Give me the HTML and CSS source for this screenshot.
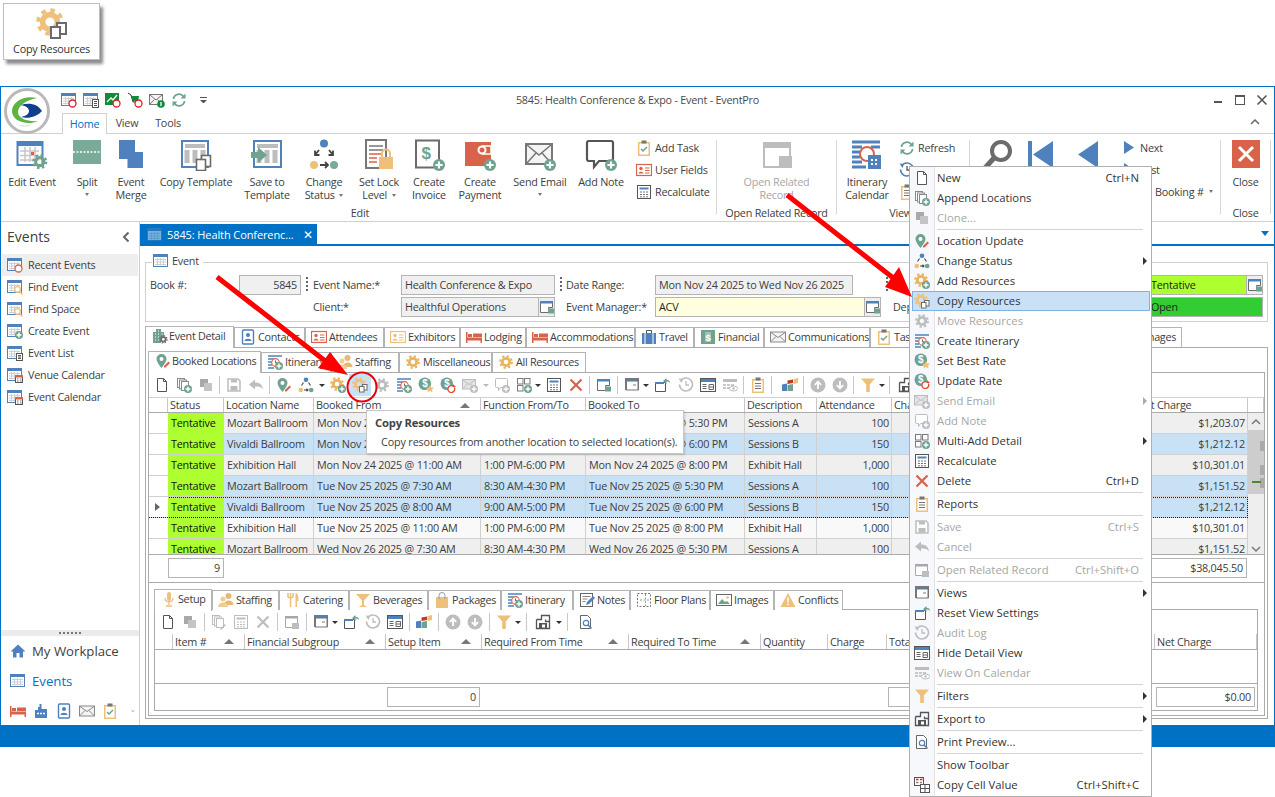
FILE: index.html
```html
<!DOCTYPE html>
<html lang="en">
<head>
<meta charset="utf-8">
<title>5845: Health Conference &amp; Expo - Event - EventPro</title>
<link rel="stylesheet" href="styles.css">
</head>
<body>
<svg class="defs" width="0" height="0" aria-hidden="true">
<defs>
<g id="pl"><circle cx="12" cy="12" r="4" fill="#6FA38F"/><path d="M12 9.6v4.8M9.6 12h4.8" stroke="#fff" stroke-width="1.4"/></g>
<g id="pld"><circle cx="12" cy="12" r="4" fill="#BDBDBD"/><path d="M12 9.6v4.8M9.6 12h4.8" stroke="#fff" stroke-width="1.4"/></g>
<g id="cf"><rect x=".5" y="1.5" width="14" height="12" fill="#fff" stroke="#4F81BD"/><rect x="1" y="2" width="13" height="2" fill="#4F81BD"/><path d="M2 6.500h11M2 9h11M2 11.500h11M4.500 5v7.500M7.500 5v7.500M10.500 5v7.500" stroke="#CFCFCF"/></g>
<g id="gr" fill="none" stroke="currentColor"><circle cx="7" cy="7" r="3.700" stroke-width="2.800"/><circle cx="7" cy="7" r="5.900" stroke-width="2" stroke-dasharray="2.300 2.330"/></g>
<g id="cp"><rect x="10.500" y="7.500" width="4.500" height="5.500" fill="#fff" stroke="#6B6B6B"/><rect x="7.500" y="9.500" width="4.500" height="5.500" fill="#fff" stroke="#6B6B6B"/></g>
<symbol id="new" viewBox="0 0 16 16"><path d="M3.500 1.500h6l3 3v10h-9z" fill="#fff" stroke="#555"/><path d="M9.500 1.500v3h3" fill="none" stroke="#555"/></symbol>
<symbol id="append" viewBox="0 0 16 16"><g fill="#fff" stroke="#8A8A8A"><rect x="1.500" y="1.500" width="7" height="9"/><rect x="3.500" y="3" width="7" height="9"/><rect x="5.500" y="4.500" width="7" height="9"/></g><use href="#pl"/></symbol>
<symbol id="appendd" viewBox="0 0 16 16"><g fill="#fff" stroke="#BDBDBD"><rect x="1.500" y="1.500" width="7" height="9"/><rect x="3.500" y="3" width="7" height="9"/><rect x="5.500" y="4.500" width="7" height="9"/></g><path d="M9 15l5-5 1 1-5 5z" fill="#BDBDBD"/></symbol>
<symbol id="clone" viewBox="0 0 16 16"><rect x="2" y="2" width="8" height="8" fill="#A8A8A8"/><rect x="6" y="6" width="8" height="8" fill="#C4C4C4"/></symbol>
<symbol id="pin" viewBox="0 0 16 16"><path d="M6.500 1a5 5 0 0 1 5 5c0 3.400-5 9-5 9s-5-5.600-5-9a5 5 0 0 1 5-5z" fill="#6FA38F"/><circle cx="6.500" cy="6" r="2" fill="#fff"/><path d="M9 13l4.500-4.500 1.500 1.500-4.500 4.500H9z" fill="#D9634A"/></symbol>
<symbol id="triad" viewBox="0 0 16 16"><circle cx="8" cy="2.800" r="2.300" fill="#4F81BD"/><circle cx="2.800" cy="13" r="2.300" fill="#EEC07A"/><circle cx="13.200" cy="13" r="2.300" fill="#6FA38F"/><path d="M6 13h4M8.500 11.800l1.500 1.200-1.500 1.200M5.500 5.500l-2 3M10.500 5.500l2 3" fill="none" stroke="#444" stroke-width="1.100"/></symbol>
<symbol id="gearplus" viewBox="0 0 16 16"><use href="#gr" color="#E9B45F"/><use href="#pl"/></symbol>
<symbol id="gearcopy" viewBox="0 0 16 16"><use href="#gr" color="#EEC07A"/><use href="#cp"/></symbol>
<symbol id="gearonly" viewBox="0 0 16 16"><g transform="translate(1 1)"><use href="#gr" color="#E9B45F"/></g></symbol>
<symbol id="geargray" viewBox="0 0 16 16"><g transform="translate(1 1)"><use href="#gr" color="#BDBDBD"/></g></symbol>
<symbol id="itin" viewBox="0 0 16 16"><path d="M1 2h14M1 5h6M1 8h4M1 11h4M1 14h6" stroke="#4F81BD" stroke-width="1.600"/><circle cx="8.500" cy="8.500" r="3.800" fill="#fff" stroke="#D9634A" stroke-width="1.200"/><path d="M8.500 6.500v2.200h1.700" fill="none" stroke="#666"/><use href="#pl"/></symbol>
<symbol id="dstar" viewBox="0 0 16 16"><circle cx="6.800" cy="6.800" r="6.300" fill="#6FA38F"/><text x="6.800" y="10.300" font-size="10" font-family="Liberation Sans" font-weight="700" fill="#fff" text-anchor="middle">$</text><path d="M12 8l1.200 2.500 2.800.3-2 1.900.6 2.800-2.600-1.400-2.600 1.400.6-2.800-2-1.900 2.800-.3z" fill="#EEC07A"/></symbol>
<symbol id="drefresh" viewBox="0 0 16 16"><circle cx="6.800" cy="6.800" r="6.300" fill="#6FA38F"/><text x="6.800" y="10.300" font-size="10" font-family="Liberation Sans" font-weight="700" fill="#fff" text-anchor="middle">$</text><path d="M14.300 10.500a3.400 3.400 0 1 1-1.100-1.200" fill="#fff" stroke="#E04B30" stroke-width="1.300"/><path d="M13 7v3h3z" fill="#E04B30"/></symbol>
<symbol id="mailplus" viewBox="0 0 16 16"><rect x=".5" y="2.500" width="13" height="9.500" fill="#E4E4E4" stroke="#BDBDBD"/><path d="M1 3l6 4.500 6-4.500M1 11.500l4.500-4.500M13 11.500l-4.500-4.500" fill="none" stroke="#BDBDBD"/><use href="#pld"/></symbol>
<symbol id="noteplus" viewBox="0 0 16 16"><path d="M2.500 1.500h10a1 1 0 0 1 1 1v7a1 1 0 0 1-1 1h-6l-2 3v-3h-2a1 1 0 0 1-1-1v-7a1 1 0 0 1 1-1z" fill="#fff" stroke="#BDBDBD"/><use href="#pld"/></symbol>
<symbol id="multi" viewBox="0 0 16 16"><g fill="#fff" stroke="#7A7A7A"><rect x="1.500" y="1.500" width="5.500" height="5.500"/><rect x="8.500" y="1.500" width="5.500" height="5.500"/><rect x="1.500" y="8.500" width="5.500" height="5.500"/></g><use href="#pl"/></symbol>
<symbol id="calc" viewBox="0 0 16 16"><rect x="1.500" y="1.500" width="13" height="13" fill="#fff" stroke="#555"/><rect x="3.500" y="3.500" width="9" height="2" fill="#4F81BD"/><path d="M4 8h2M7 8h2M10 8h2M4 10.500h2M7 10.500h2M10 10.500h2M4 12.800h2M7 12.800h2M10 12.800h2" stroke="#777"/></symbol>
<symbol id="calcd" viewBox="0 0 16 16"><rect x="1.500" y="1.500" width="13" height="13" fill="#fff" stroke="#BDBDBD"/><rect x="3.500" y="3.500" width="9" height="2" fill="#BDBDBD"/><path d="M4 8h2M7 8h2M10 8h2M4 10.500h2M7 10.500h2M10 10.500h2M4 12.800h2M7 12.800h2M10 12.800h2" stroke="#BDBDBD"/></symbol>
<symbol id="x" viewBox="0 0 16 16"><path d="M2.500 2.500l11 11M13.500 2.500l-11 11" stroke="#D9634A" stroke-width="2.200"/></symbol>
<symbol id="xd" viewBox="0 0 16 16"><path d="M2.500 2.500l11 11M13.500 2.500l-11 11" stroke="#BDBDBD" stroke-width="2.200"/></symbol>
<symbol id="clip" viewBox="0 0 16 16"><rect x="2" y="2" width="12" height="14" fill="#EEC07A"/><rect x="3.500" y="3.500" width="9" height="11" fill="#fff"/><rect x="5.500" y=".5" width="5" height="3" fill="#777"/><path d="M5 6.500h6M5 9h6M5 11.500h6" stroke="#777"/></symbol>
<symbol id="clipok" viewBox="0 0 16 16"><rect x="2" y="2" width="12" height="14" fill="#EEC07A"/><rect x="3.500" y="3.500" width="9" height="11" fill="#fff"/><rect x="5.500" y=".5" width="5" height="3" fill="#777"/><path d="M5 9l2 2 4-4" fill="none" stroke="#6FA38F" stroke-width="1.500"/></symbol>
<symbol id="save" viewBox="0 0 16 16"><path d="M2 2h10l2 2v10H2z" fill="#fff" stroke="#BDBDBD" stroke-width="1.500"/><rect x="5" y="2.500" width="6" height="3" fill="#BDBDBD"/><rect x="4.500" y="9" width="7" height="4.500" fill="#BDBDBD"/></symbol>
<symbol id="undo" viewBox="0 0 16 16"><path d="M1 7.500l6-5v3c5 0 7.500 2.500 8 7-1.500-2.500-3.500-3-8-3v3z" fill="#BDBDBD"/></symbol>
<symbol id="openrel" viewBox="0 0 16 16"><path d="M1.500 2.500h12v8h-4v3h-8z" fill="#fff" stroke="#A8A8A8"/><rect x="1" y="2" width="13" height="2.500" fill="#A8A8A8"/><rect x="8" y="9" width="7" height="6" fill="#BDBDBD"/></symbol>
<symbol id="openrelc" viewBox="0 0 16 16"><path d="M1.500 2.500h12v6h-4v5h-8z" fill="#fff" stroke="#6B6B6B"/><rect x="1" y="2" width="13" height="2.500" fill="#4F81BD"/><rect x="9" y="9.500" width="6" height="5" fill="#6FA38F"/></symbol>
<symbol id="views" viewBox="0 0 16 16"><rect x="1.500" y="1.500" width="13" height="11" fill="#fff" stroke="#777"/><rect x="2" y="2" width="12" height="2.500" fill="#4F81BD"/><rect x="2.500" y="4" width="11.500" height="9" fill="#fff" stroke="#777"/><rect x="9" y="7" width="3" height="2" fill="#BDBDBD"/></symbol>
<symbol id="reset" viewBox="0 0 16 16"><path d="M1.500 5.500h10v9h-10z" fill="#fff" stroke="#555"/><rect x="1" y="5" width="9" height="2" fill="#4F81BD"/><path d="M9 4l3.500-3v1.800c2 0 3.500 1 3.500 3.200-1-1.200-2-1.500-3.500-1.500V7z" fill="#6FA38F"/></symbol>
<symbol id="audit" viewBox="0 0 16 16"><path d="M2.500 4a6.500 6.500 0 1 1-1 3.500" fill="none" stroke="#BDBDBD" stroke-width="1.600"/><path d="M0.500 1.500l4.500.5-1.500 4z" fill="#BDBDBD"/><path d="M8 4v4h3" fill="none" stroke="#BDBDBD" stroke-width="1.300"/></symbol>
<symbol id="hide" viewBox="0 0 16 16"><rect x=".5" y="1.500" width="15" height="13" fill="#fff" stroke="#555"/><rect x="1" y="2" width="14" height="3" fill="#4F81BD"/><path d="M2.500 7.500h4M2.500 9.500h4M2.500 11.500h4M9 7.500h4.500v5H9zM9 10h4.500" fill="none" stroke="#666"/></symbol>
<symbol id="viewcal" viewBox="0 0 16 16"><rect x="1" y="2" width="14" height="3" fill="#BDBDBD"/><path d="M1 7h3v2H1zM5 7h3v2H5zM9 7h3v2H9zM1 10h3v2H1zM5 10h3v2H5z" fill="#C8C8C8"/><ellipse cx="11.500" cy="11.500" rx="4" ry="2.500" fill="#fff" stroke="#BDBDBD"/><circle cx="11.500" cy="11.500" r="1.200" fill="#BDBDBD"/></symbol>
<symbol id="filter" viewBox="0 0 16 16"><path d="M1 1.500h14L9.800 7.500v7.500H6.200V7.500z" fill="#EEC07A"/></symbol>
<symbol id="export" viewBox="0 0 16 16"><path d="M1.500 5.500h5v-4h8v6h-4v-2M1.500 5.500v9h13v-7" fill="none" stroke="#555" stroke-width="1.300"/><rect x="4" y="9" width="8" height="5.500" fill="#555"/><rect x="7" y="10.500" width="3" height="3" fill="#fff"/></symbol>
<symbol id="preview" viewBox="0 0 16 16"><path d="M2.500 1.500h7l3 3v10h-10z" fill="#fff" stroke="#666"/><circle cx="8" cy="9" r="2.700" fill="#fff" stroke="#4F81BD" stroke-width="1.200"/><path d="M10 11l3.500 3.500" stroke="#4F81BD" stroke-width="1.500"/></symbol>
<symbol id="copycell" viewBox="0 0 16 16"><rect x=".5" y=".5" width="9" height="8" fill="#fff" stroke="#555"/><path d="M2 2.500h2.500M6 2.500h2.500" stroke="#D22" stroke-width="1.500"/><path d="M2 5.500h2.500M6 5.500h2" stroke="#888" stroke-width="1.500"/><rect x="6.500" y="7.500" width="9" height="8" fill="#fff" stroke="#555"/><path d="M6.500 11.500h9M11 7.500v8" stroke="#555"/></symbol>
<symbol id="rainbow" viewBox="0 0 16 16"><path d="M0 7.500L5 6.500V14H0z" fill="#4F81BD"/><path d="M5.500 3.500L11 2.500V6L5.500 7z" fill="#C8352B"/><path d="M5.500 8L11 7v7H5.500z" fill="#6FA38F"/><path d="M11.500 2L16 1v5l-4.500 1z" fill="#EEC07A"/></symbol>
<symbol id="up" viewBox="0 0 16 16"><circle cx="8" cy="8" r="7.500" fill="#BDBDBD"/><path d="M8 12V5M4.800 8L8 4.500 11.200 8" fill="none" stroke="#fff" stroke-width="1.800"/></symbol>
<symbol id="down" viewBox="0 0 16 16"><circle cx="8" cy="8" r="7.500" fill="#BDBDBD"/><path d="M8 4v7M4.800 8L8 11.500 11.200 8" fill="none" stroke="#fff" stroke-width="1.800"/></symbol>
<symbol id="cal" viewBox="0 0 16 16"><use href="#cf"/></symbol>
<symbol id="calrecent" viewBox="0 0 16 16"><use href="#cf"/><circle cx="11.500" cy="11.500" r="3.500" fill="#fff" stroke="#D9634A" stroke-width="1.300"/></symbol>
<symbol id="calfind" viewBox="0 0 16 16"><use href="#cf"/><circle cx="10.500" cy="10.500" r="2.800" fill="#fff" stroke="#EEC07A" stroke-width="1.300"/><path d="M12.500 12.500l3 3" stroke="#EEC07A" stroke-width="1.500"/></symbol>
<symbol id="calplus" viewBox="0 0 16 16"><use href="#cf"/><use href="#pl"/></symbol>
<symbol id="callist" viewBox="0 0 16 16"><use href="#cf"/><rect x="9.500" y="8.500" width="6" height="7" fill="#fff" stroke="#555"/><path d="M11 10.500h3M11 12h3M11 13.500h3" stroke="#555"/></symbol>
<symbol id="calcal" viewBox="0 0 16 16"><use href="#cf"/><rect x="8.500" y="8.500" width="7" height="7" fill="#fff" stroke="#555"/><rect x="8" y="8" width="8" height="2.500" fill="#D9634A"/><path d="M10 12h1.500M13 12h1.500M10 14h1.500M13 14h1.500" stroke="#777"/></symbol>
<symbol id="bld" viewBox="0 0 16 16"><path d="M1 15V4h3V1h5v3h3v5H9v6z" fill="#6FA38F"/><path d="M3 6h1M6 3h1M6 6h1M3 9h1M6 9h1M3 12h1M6 12h1M9.500 6h1" stroke="#fff"/><g transform="translate(7 7) scale(.62)"><use href="#gr" color="#6B6B6B"/></g></symbol>
<symbol id="contact" viewBox="0 0 16 16"><rect x="2.500" y="1" width="11" height="14" rx="1" fill="#fff" stroke="#4F81BD" stroke-width="1.400"/><circle cx="8" cy="6" r="2" fill="#4F81BD"/><path d="M4.500 12c0-3 7-3 7 0z" fill="#4F81BD"/></symbol>
<symbol id="attend" viewBox="0 0 16 16"><rect x=".5" y="2.500" width="15" height="11" fill="#fff" stroke="#D9634A" stroke-width="1.200"/><circle cx="5" cy="6.500" r="1.700" fill="#D9634A"/><path d="M2.500 11.500c0-2.500 5-2.500 5 0z" fill="#D9634A"/><path d="M9 6h4.500M9 8.500h4.500M9 11h4.500" stroke="#D9634A"/></symbol>
<symbol id="exhib" viewBox="0 0 16 16"><rect x=".5" y="2.500" width="15" height="11" fill="#fff" stroke="#EEC07A" stroke-width="1.200"/><circle cx="5" cy="6.500" r="1.700" fill="#EEC07A"/><path d="M2.500 11.500c0-2.500 5-2.500 5 0z" fill="#EEC07A"/><path d="M9 6h4.500M9 8.500h4.500M9 11h4.500" stroke="#EEC07A"/></symbol>
<symbol id="bed" viewBox="0 0 16 16"><path d="M0 3h1.500v5.500H16V14h-1.500v-2.500h-13V14H0z" fill="#D9634A"/><rect x="2" y="5" width="4" height="3" fill="#D9634A"/><rect x="7" y="4.500" width="9" height="3.500" fill="#D9634A"/></symbol>
<symbol id="case" viewBox="0 0 16 16"><rect x="1" y="4" width="14" height="11" fill="#4F81BD"/><path d="M5.500 4V1.500h5V4" fill="none" stroke="#555"/><path d="M4 4v11M12 4v11" stroke="#fff"/></symbol>
<symbol id="bill" viewBox="0 0 16 16"><rect x="1" y="1" width="14" height="14" fill="#6FA38F"/><rect x="5" y="3" width="6" height="10" fill="#fff" opacity=".35"/><text x="8" y="11.500" font-size="9.500" font-family="Liberation Sans" font-weight="700" fill="#fff" text-anchor="middle">$</text></symbol>
<symbol id="mail" viewBox="0 0 16 16"><rect x=".5" y="3" width="15" height="10" fill="#F4F4F4" stroke="#888"/><path d="M1 3.500l7 5 7-5M1 12.500l5-5M15 12.500l-5-5" fill="none" stroke="#888"/></symbol>
<symbol id="people" viewBox="0 0 16 16"><circle cx="10.500" cy="4" r="3" fill="#E8B878"/><path d="M6 13c0-6 9.500-6 9.500 0z" fill="#E8B878"/><circle cx="5" cy="7" r="2.500" fill="#EFCB98"/><path d="M0 15c0-6 10-6 10 0z" fill="#EFCB98"/></symbol>
<symbol id="mic" viewBox="0 0 16 16"><rect x="6" y="1" width="4" height="9" rx="2" fill="#EEC07A"/><path d="M4 7c0 5 8 5 8 0M8 11v3M5 15h6" fill="none" stroke="#EEC07A" stroke-width="1.300"/></symbol>
<symbol id="fork" viewBox="0 0 16 16"><path d="M3 1v4.500M5.500 1v4.500M8 1v4.500M3 5.500h5M5.500 5v10" stroke="#EEC07A" stroke-width="1.500" fill="none"/><path d="M10.500 1c3 0 3 5 3 8h-1.500v6h-1.500z" fill="#EEC07A"/></symbol>
<symbol id="goblet" viewBox="0 0 16 16"><path d="M1 2h14L9 8.500V13l3 2H4l3-2V8.500z" fill="#EEC07A"/></symbol>
<symbol id="bag" viewBox="0 0 16 16"><rect x="2" y="5" width="12" height="11" fill="#EEC07A"/><path d="M5 7V3.500a3 3 0 0 1 6 0V7" fill="none" stroke="#999"/></symbol>
<symbol id="note" viewBox="0 0 16 16"><rect x="1.500" y="1.500" width="12" height="13" fill="#fff" stroke="#666"/><path d="M3.500 4.500h8M3.500 7h5M3.500 9.500h3" stroke="#888"/><path d="M7 13l1-3 6-6 2 2-6 6z" fill="#4F81BD"/></symbol>
<symbol id="plan" viewBox="0 0 16 16"><rect x="1.500" y="1.500" width="13" height="13" fill="none" stroke="#777" stroke-dasharray="2 1.500"/><path d="M9.500 2v12M4 8h9" stroke="#999" stroke-dasharray="2 1.500"/></symbol>
<symbol id="image" viewBox="0 0 16 16"><rect x=".5" y="2.500" width="15" height="11" fill="#fff" stroke="#666"/><path d="M2 12l4-5 3 3 2-1 3 3z" fill="#6FA38F"/><circle cx="11.500" cy="5.500" r="1.300" fill="#EEC07A"/></symbol>
<symbol id="warn" viewBox="0 0 16 16"><path d="M8 1l7.500 14H.5z" fill="#EEC07A"/><path d="M8 5.500v5M8 11.500v1.500" stroke="#fff" stroke-width="1.500"/></symbol>
<symbol id="home" viewBox="0 0 16 16"><path d="M8 1.500L15.500 8.500H13V14.500H9.500V10h-3v4.500H3V8.500H.5z" fill="#4F81BD"/></symbol>
<symbol id="factory" viewBox="0 0 16 16"><path d="M2 15V7h3V4h1.500V1h2v5H14v9z" fill="#4F81BD"/><path d="M4 10.500h2M7 10.500h2M10 10.500h2" stroke="#fff" stroke-width="1.500"/></symbol>
<symbol id="refresh" viewBox="0 0 16 16"><path d="M2.500 7A5.500 5.500 0 0 1 12.500 4.500M13.500 9A5.500 5.500 0 0 1 3.500 11.500" fill="none" stroke="#6FA38F" stroke-width="1.800"/><path d="M14.500 1.500v5h-5zM1.500 14.500v-5h5z" fill="#6FA38F"/></symbol>
<symbol id="clock" viewBox="0 0 16 16"><path d="M2.500 4a6.500 6.500 0 1 1-1 3.500" fill="none" stroke="#4F81BD" stroke-width="1.600"/><path d="M.5 1.500L5 2 3.500 6z" fill="#4F81BD"/><path d="M8 4v4h3" fill="none" stroke="#555" stroke-width="1.300"/></symbol>
<symbol id="qcal" viewBox="0 0 16 16"><use href="#cf"/><circle cx="11.500" cy="11.500" r="3.500" fill="#fff" stroke="#D22" stroke-width="1.300"/></symbol>
<symbol id="qlist" viewBox="0 0 16 16"><use href="#cf"/><rect x="9.500" y="7.500" width="6" height="8" fill="#fff" stroke="#555"/><path d="M11 9.500h3M11 11.500h3M11 13.500h3" stroke="#555"/></symbol>
<symbol id="qchart" viewBox="0 0 16 16"><rect x="0" y="1" width="14" height="12" fill="#0E8C3A"/><path d="M2 10l4-4 2 2 4-5" fill="none" stroke="#fff" stroke-width="1.300"/><circle cx="11.500" cy="11.500" r="3.500" fill="#fff" stroke="#D22" stroke-width="1.300"/></symbol>
<symbol id="qcart" viewBox="0 0 16 16"><path d="M1 1l3 2 2 7h6" fill="none" stroke="#333"/><path d="M4 4h8l-1 5H6z" fill="#0E8C3A"/><circle cx="11.500" cy="11.500" r="3.500" fill="#fff" stroke="#D22" stroke-width="1.300"/></symbol>
<symbol id="qmail" viewBox="0 0 16 16"><rect x=".5" y="2.500" width="13" height="10" fill="#F4F4F4" stroke="#777"/><path d="M1 3l6 5 6-5M1 12l4.500-4.500M13 12L8.500 7.500" fill="none" stroke="#777"/><circle cx="12" cy="12" r="3.800" fill="#0E8C3A"/><path d="M12 10v4" stroke="#fff" stroke-width="1.300"/></symbol>
<symbol id="L-edit" viewBox="0 0 32 32"><rect x="1.500" y="3" width="25" height="23" fill="#fff" stroke="#4F81BD" stroke-width="2"/><rect x="2" y="3" width="24" height="4" fill="#4F81BD"/><path d="M4 12h19M4 16.500h19M4 21h19M9 8v15M14 8v15M19 8v15" stroke="#C8C8C8" stroke-width="1.500"/><rect x="15" y="13" width="3" height="3" fill="#D9634A"/><g transform="translate(16 15) scale(1.100)"><use href="#gr" color="#6FA38F"/></g></symbol>
<symbol id="L-split" viewBox="0 0 32 32"><rect x="2" y="1" width="28" height="24" fill="#7AAB99"/><path d="M2 13h28" stroke="#fff" stroke-width="1.500" stroke-dasharray="2 1.500"/></symbol>
<symbol id="L-merge" viewBox="0 0 32 32"><rect x="4" y="1" width="16" height="19" fill="#4F81BD"/><rect x="12.500" y="13" width="15.500" height="16" fill="#4F81BD"/></symbol>
<symbol id="L-ctpl" viewBox="0 0 32 32"><rect x="2" y="2" width="26" height="26" fill="#fff" stroke="#4F81BD" stroke-width="2"/><rect x="5" y="5" width="20" height="4" fill="#BDBDBD"/><path d="M7 11v13M15 11v13M23 11v13" stroke="#BDBDBD" stroke-width="5"/><rect x="21.500" y="16.500" width="9" height="11" fill="#fff" stroke="#6B6B6B" stroke-width="1.600"/><rect x="16.500" y="20.500" width="9" height="11" fill="#fff" stroke="#6B6B6B" stroke-width="1.600"/></symbol>
<symbol id="L-stpl" viewBox="0 0 32 32"><rect x="3" y="2" width="27" height="26" fill="#fff" stroke="#4F81BD" stroke-width="2"/><rect x="6" y="5" width="21" height="4" fill="#BDBDBD"/><path d="M8 11v13M16 11v13M24 11v13" stroke="#BDBDBD" stroke-width="5"/><path d="M0 13h7V8l9 8-9 8v-5H0z" fill="#6FA38F"/></symbol>
<symbol id="L-status" viewBox="0 0 32 32"><circle cx="16" cy="4.500" r="4" fill="#4F81BD"/><circle cx="6" cy="26" r="4" fill="#EEC07A"/><circle cx="26" cy="26" r="4" fill="#7AAB99"/><path d="M12 26h8M17 23l3 3-3 3M11 11l-4 5M7 11.500v4.500h4.500M21 11l4 5M25 11.500V16h-4.500" fill="none" stroke="#444" stroke-width="1.800"/></symbol>
<symbol id="L-lock" viewBox="0 0 32 32"><rect x="3" y="1" width="20" height="28" fill="#fff" stroke="#777" stroke-width="2"/><path d="M6 7h14M6 11h14" stroke="#777" stroke-width="1.500"/><path d="M6 15h14M6 19h8M6 23h8" stroke="#D9634A" stroke-width="1.500"/><rect x="16" y="18" width="14" height="12" fill="#EEC07A"/><path d="M19 18v-3.500a4 4 0 0 1 8 0V18" fill="none" stroke="#EEC07A" stroke-width="2"/></symbol>
<symbol id="L-inv" viewBox="0 0 32 32"><rect x="3" y="1.500" width="23" height="27" fill="#fff" stroke="#6B6B6B" stroke-width="2"/><text x="13" y="20" font-size="17" font-family="Liberation Sans" font-weight="700" fill="#6FA38F" text-anchor="middle">$</text><g transform="translate(8 8) scale(1.500)"><use href="#pl"/></g></symbol>
<symbol id="L-pay" viewBox="0 0 32 32"><rect x="1" y="3" width="26" height="24" fill="#D9634A"/><circle cx="18" cy="11" r="3.500" fill="none" stroke="#fff" stroke-width="2"/><path d="M18 7h9v8h-9" fill="none" stroke="#fff" stroke-width="1.500"/><g transform="translate(8 8) scale(1.500)"><use href="#pl"/></g></symbol>
<symbol id="L-mail" viewBox="0 0 32 32"><rect x="2" y="5" width="26" height="20" fill="#F4F4F4" stroke="#777" stroke-width="2"/><path d="M3 6l12 10 12-10M3 24l9-10M27 24l-9-10" fill="none" stroke="#777" stroke-width="1.500"/><g transform="translate(8 8) scale(1.500)"><use href="#pl"/></g></symbol>
<symbol id="L-note" viewBox="0 0 32 32"><path d="M4 2h22a2 2 0 0 1 2 2v16a2 2 0 0 1-2 2H14l-5 6v-6H4a2 2 0 0 1-2-2V4a2 2 0 0 1 2-2z" fill="#fff" stroke="#555" stroke-width="2.200"/><g transform="translate(8 8) scale(1.500)"><use href="#pl"/></g></symbol>
<symbol id="L-open" viewBox="0 0 32 32"><path d="M3 4h26v15h-9v9H3z" fill="#fff" stroke="#BDBDBD" stroke-width="2"/><rect x="2" y="3" width="28" height="6" fill="#BDBDBD"/><rect x="18" y="17" width="13" height="12" fill="#BDBDBD"/></symbol>
<symbol id="L-itin" viewBox="0 0 32 32"><path d="M1 3h28M1 8h10M1 13h8M1 18h8M1 23h10M1 28h14M20 8h9" stroke="#4F81BD" stroke-width="3"/><circle cx="16" cy="15" r="7" fill="#fff" stroke="#D9634A" stroke-width="2"/><rect x="17" y="16" width="13" height="14" fill="#4F81BD"/><path d="M20 21h2M24 21h2M20 25h2M24 25h2" stroke="#fff" stroke-width="2"/></symbol>
<symbol id="L-find" viewBox="0 0 32 32"><circle cx="19" cy="12" r="9" fill="#fff" stroke="#6B6B6B" stroke-width="4"/><path d="M12 19L3 29" stroke="#6B6B6B" stroke-width="5"/></symbol>
<symbol id="L-first" viewBox="0 0 32 32"><rect x="3" y="2" width="4" height="27" fill="#4F81BD"/><path d="M28 2v27L8 15.500z" fill="#4F81BD"/></symbol>
<symbol id="L-prev" viewBox="0 0 32 32"><path d="M26 2v27L6 15.500z" fill="#4F81BD"/></symbol>
<symbol id="next" viewBox="0 0 16 16"><path d="M3 1v13l10-6.500z" fill="#4F81BD"/></symbol>
<symbol id="L-close" viewBox="0 0 32 32"><rect x="2" y="1" width="28" height="28" fill="#D9634A"/><path d="M9 8l14 14M23 8L9 22" stroke="#fff" stroke-width="3"/></symbol>
<symbol id="L-gear" viewBox="0 0 16 16"><use href="#gr" color="#EEC07A"/><use href="#cp"/></symbol>
</defs>
</svg>

<div class="callout">
  <svg class="callout-icon"><use href="#L-gear"/></svg>
  <span>Copy Resources</span>
</div>

<div class="window">
  <svg class="logo" viewBox="0 0 46 46">
    <circle cx="23" cy="23" r="21.500" fill="#fff" stroke="#B9B9B9" stroke-width="3"/>
    <path d="M33 10C20 7 8 14 8 23c0 7 7 12 17 12 3 0 6-.5 9-2-9 1-20-2-20-9 0-6 8-12 19-14z" fill="#5FB346"/>
    <path d="M17 17c8-3 17-1 21 6-5 6-14 8-21 6 5-1 8-3 8-6s-3-5-8-6z" fill="#123F8C"/>
    <path d="M14 37c4 2 9 2 13 0-4 .5-9 .5-13 0z" fill="#CFE6BF"/>
  </svg>
  <header class="titlebar">
    <div class="qat">
      <svg class="i"><use href="#qcal"/></svg><svg class="i"><use href="#qlist"/></svg><svg class="i"><use href="#qchart"/></svg><svg class="i"><use href="#qcart"/></svg><svg class="i"><use href="#qmail"/></svg><svg class="i"><use href="#refresh"/></svg>
      <span class="qat-drop"></span>
    </div>
    <div class="wintitle">5845: Health Conference &amp; Expo - Event - EventPro</div>
    <div class="winctl">
      <svg class="ctl" viewBox="0 0 22 16"><path d="M7 10h8" stroke="#555" stroke-width="2"/></svg>
      <svg class="ctl" viewBox="0 0 22 16"><rect x="6.500" y="3.500" width="9" height="9" fill="none" stroke="#555"/><path d="M6 4h10" stroke="#555" stroke-width="2"/></svg>
      <svg class="ctl" viewBox="0 0 22 16"><path d="M6.500 3.500l9 9M15.500 3.500l-9 9" stroke="#555" stroke-width="1.600"/></svg>
    </div>
  </header>
  <nav class="rtabs">
    <span class="rtab on">Home</span><span class="rtab t-view">View</span><span class="rtab t-tools">Tools</span>
    <svg class="collapse" viewBox="0 0 12 8"><path d="M2 6l4-4 4 4" fill="none" stroke="#666" stroke-width="1.500"/></svg>
  </nav>
  <section class="ribbon">
    <div class="rg g-edit">
      <div class="rb-body edit-cols">
        <div class="rb"><svg class="lg"><use href="#L-edit"/></svg><span>Edit Event</span></div>
        <div class="rb"><svg class="lg"><use href="#L-split"/></svg><span>Split</span><i class="dd"></i></div>
        <div class="rb"><svg class="lg"><use href="#L-merge"/></svg><span>Event<br>Merge</span></div>
        <div class="rb"><svg class="lg"><use href="#L-ctpl"/></svg><span>Copy Template</span></div>
        <div class="rb"><svg class="lg"><use href="#L-stpl"/></svg><span>Save to<br>Template</span></div>
        <div class="rb"><svg class="lg"><use href="#L-status"/></svg><span>Change<br>Status <i class="dd in"></i></span></div>
        <div class="rb"><svg class="lg"><use href="#L-lock"/></svg><span>Set Lock<br>Level <i class="dd in"></i></span></div>
        <div class="rb"><svg class="lg"><use href="#L-inv"/></svg><span>Create<br>Invoice</span></div>
        <div class="rb"><svg class="lg"><use href="#L-pay"/></svg><span>Create<br>Payment</span></div>
        <div class="rb"><svg class="lg"><use href="#L-mail"/></svg><span>Send Email</span><i class="dd"></i></div>
        <div class="rb"><svg class="lg"><use href="#L-note"/></svg><span>Add Note</span></div>
        <div class="rsmall">
          <div><svg class="i"><use href="#clipok"/></svg>Add Task</div>
          <div><svg class="i"><use href="#attend"/></svg>User Fields</div>
          <div><svg class="i"><use href="#calc"/></svg>Recalculate</div>
        </div>
      </div>
      <div class="rb-label">Edit</div>
    </div>
    <div class="rg g-open">
      <div class="rb-body"><div class="rb w-open off"><svg class="lg"><use href="#L-open"/></svg><span>Open Related<br>Record</span></div></div>
      <div class="rb-label">Open Related Record</div>
    </div>
    <div class="rg g-view">
      <div class="rb-body">
        <div class="rb w-itin"><svg class="lg"><use href="#L-itin"/></svg><span>Itinerary<br>Calendar</span></div>
        <div class="rsmall s-view">
          <div><svg class="i"><use href="#refresh"/></svg>Refresh</div>
          <div><svg class="i"><use href="#clock"/></svg></div>
          <div><svg class="i"><use href="#clip"/></svg></div>
        </div>
      </div>
      <div class="rb-label">Views</div>
    </div>
    <div class="rg g-nav">
      <div class="rb-body">
        <div class="rb w-find"><svg class="lg"><use href="#L-find"/></svg></div>
        <div class="rb w-first"><svg class="lg"><use href="#L-first"/></svg></div>
        <div class="rb w-prev"><svg class="lg"><use href="#L-prev"/></svg></div>
        <div class="rsmall s-nav">
          <div><svg class="i"><use href="#next"/></svg>Next</div>
          <div><svg class="i"><use href="#next"/></svg>Last</div>
          <div class="sortby">Booking # <i class="dd in"></i></div>
        </div>
      </div>
      <div class="rb-label"></div>
    </div>
    <div class="rg g-close">
      <div class="rb-body"><div class="rb w-close"><svg class="lg"><use href="#L-close"/></svg><span>Close</span></div></div>
      <div class="rb-label">Close</div>
    </div>
  </section>

  <div class="main">
    <aside class="sidebar">
      <div class="side-head"><span>Events</span><svg class="chev" viewBox="0 0 10 12"><path d="M7.500 1.500L3 6l4.500 4.500" fill="none" stroke="#666" stroke-width="2"/></svg></div>
      <ul class="side-list">
        <li class="on"><svg class="i"><use href="#calrecent"/></svg>Recent Events</li>
        <li><svg class="i"><use href="#calfind"/></svg>Find Event</li>
        <li><svg class="i"><use href="#calfind"/></svg>Find Space</li>
        <li><svg class="i"><use href="#calplus"/></svg>Create Event</li>
        <li><svg class="i"><use href="#callist"/></svg>Event List</li>
        <li><svg class="i"><use href="#calcal"/></svg>Venue Calendar</li>
        <li><svg class="i"><use href="#calcal"/></svg>Event Calendar</li>
      </ul>
      <div class="splitter"><span></span></div>
      <div class="side-big"><svg class="i"><use href="#home"/></svg>My Workplace</div>
      <div class="side-big cur"><svg class="i"><use href="#cal"/></svg>Events</div>
      <div class="side-icons">
        <svg class="i"><use href="#bed"/></svg><svg class="i"><use href="#factory"/></svg><svg class="i"><use href="#contact"/></svg><svg class="i"><use href="#mail"/></svg><svg class="i"><use href="#clipok"/></svg>
        <svg class="small-chev" viewBox="0 0 12 8"><path d="M2 2l4 4 4-4" fill="none" stroke="#666" stroke-width="2"/></svg>
      </div>
    </aside>

    <div class="content">
      <div class="doctabs">
        <div class="doctab"><svg class="i dim"><use href="#cal"/></svg><span>5845: Health Conferenc...</span><b>✕</b></div>
        <i class="doc-drop"></i>
      </div>

      <div class="group">
        <div class="legend"><svg class="i"><use href="#cal"/></svg>Event</div>
        <div class="form">
          <label>Book #:</label><div class="inp num">5845</div><i class="dots"></i>
          <label>Event Name:*</label><div class="inp">Health Conference &amp; Expo</div><i class="dots"></i>
          <label>Date Range:</label><div class="inp date">Mon Nov 24 2025 to Wed Nov 26 2025</div><i class="dots"></i>
          <label></label><div class="inp tent"><span>Tentative</span><em><svg class="i"><use href="#openrelc"/></svg></em></div>

          <label></label><div></div><i></i>
          <label>Client:*</label><div class="inp"><span>Healthful Operations</span><em><svg class="i"><use href="#openrelc"/></svg></em></div><i></i>
          <label>Event Manager:*</label><div class="inp yellow"><span>ACV</span><em><svg class="i"><use href="#openrelc"/></svg></em></div><i></i>
          <label>Department:</label><div class="inp open">Open</div>
        </div>
      </div>

      <div class="tabs tabs1">
        <div class="tab on"><svg class="i"><use href="#bld"/></svg>Event Detail</div>
        <div class="tab"><svg class="i"><use href="#contact"/></svg>Contacts</div>
        <div class="tab"><svg class="i"><use href="#attend"/></svg>Attendees</div>
        <div class="tab"><svg class="i"><use href="#exhib"/></svg>Exhibitors</div>
        <div class="tab"><svg class="i"><use href="#bed"/></svg>Lodging</div>
        <div class="tab"><svg class="i"><use href="#bed"/></svg>Accommodations</div>
        <div class="tab"><svg class="i"><use href="#case"/></svg>Travel</div>
        <div class="tab"><svg class="i"><use href="#bill"/></svg>Financial</div>
        <div class="tab"><svg class="i"><use href="#mail"/></svg>Communications</div>
        <div class="tab"><svg class="i"><use href="#clipok"/></svg>Tasks</div>
        <div class="tab"></div>
        <div class="tab"></div>
        <div class="tab last"><svg class="i"><use href="#image"/></svg>Images</div>
      </div>
      <div class="box1">
        <div class="tabs tabs2">
          <div class="tab on"><svg class="i"><use href="#pin"/></svg>Booked Locations</div>
          <div class="tab"><svg class="i"><use href="#itin"/></svg>Itinerary</div>
          <div class="tab"><svg class="i"><use href="#people"/></svg>Staffing</div>
          <div class="tab"><svg class="i"><use href="#gearonly"/></svg>Miscellaneous</div>
          <div class="tab"><svg class="i"><use href="#gearonly"/></svg>All Resources</div>
        </div>
        <div class="box2">
          <div class="tb">
            <svg class="ti"><use href="#new"/></svg><svg class="ti"><use href="#append"/></svg><svg class="ti"><use href="#clone"/></svg><i class="sep"></i>
            <svg class="ti"><use href="#save"/></svg><svg class="ti"><use href="#undo"/></svg><i class="sep"></i>
            <svg class="ti"><use href="#pin"/></svg><svg class="ti"><use href="#triad"/></svg><i class="tdd w"></i>
            <svg class="ti"><use href="#gearplus"/></svg><span class="ti-on"><svg class="i"><use href="#gearcopy"/></svg></span><svg class="ti"><use href="#geargray"/></svg>
            <svg class="ti"><use href="#itin"/></svg><svg class="ti"><use href="#dstar"/></svg><svg class="ti"><use href="#drefresh"/></svg>
            <svg class="ti"><use href="#mailplus"/></svg><i class="tdd w off"></i><svg class="ti"><use href="#noteplus"/></svg>
            <svg class="ti"><use href="#multi"/></svg><i class="tdd"></i><svg class="ti"><use href="#calc"/></svg><svg class="ti"><use href="#x"/></svg><i class="sep"></i>
            <svg class="ti"><use href="#openrelc"/></svg><i class="sep"></i>
            <svg class="ti"><use href="#views"/></svg><i class="tdd"></i><svg class="ti"><use href="#reset"/></svg><svg class="ti ml2"><use href="#audit"/></svg>
            <svg class="ti"><use href="#hide"/></svg><svg class="ti"><use href="#viewcal"/></svg><i class="sep"></i>
            <svg class="ti"><use href="#clip"/></svg><i class="sep"></i>
            <svg class="ti ml4"><use href="#rainbow"/></svg><i class="sep"></i>
            <svg class="ti"><use href="#up"/></svg><svg class="ti"><use href="#down"/></svg><i class="sep"></i>
            <svg class="ti"><use href="#filter"/></svg><i class="tdd"></i><i class="sep"></i>
            <svg class="ti ml2"><use href="#export"/></svg>
          </div>
          <div class="grid">
            <div class="cols-a ghead">
              <div class="h"></div><div class="h">Status</div><div class="h">Location Name</div><div class="h sort">Booked From</div><div class="h">Function From/To</div><div class="h">Booked To</div><div class="h">Description</div><div class="h">Attendance</div><div class="h">Charge</div><div class="h"></div><div class="h">Net Charge</div><div class="h"></div>
            </div>
            <div class="gbody">
              <div class="rows">
                <div class="cols-b row"><div class="c ind"></div><div class="c st">Tentative</div><div class="c">Mozart Ballroom</div><div class="c">Mon Nov 24 2025 @ 7:30 AM</div><div class="c">8:30 AM-4:30 PM</div><div class="c">Mon Nov 24 2025 @ 5:30 PM</div><div class="c">Sessions A</div><div class="c r">100</div><div class="c r">$1,000.00</div><div class="c"></div><div class="c r">$1,203.07</div></div>
                <div class="cols-b row sel"><div class="c ind"></div><div class="c st">Tentative</div><div class="c">Vivaldi Ballroom</div><div class="c">Mon Nov 24 2025 @ 8:00 AM</div><div class="c">9:00 AM-5:00 PM</div><div class="c">Mon Nov 24 2025 @ 6:00 PM</div><div class="c">Sessions B</div><div class="c r">150</div><div class="c r">$1,000.00</div><div class="c"></div><div class="c r">$1,212.12</div></div>
                <div class="cols-b row"><div class="c ind"></div><div class="c st">Tentative</div><div class="c">Exhibition Hall</div><div class="c">Mon Nov 24 2025 @ 11:00 AM</div><div class="c">1:00 PM-6:00 PM</div><div class="c">Mon Nov 24 2025 @ 8:00 PM</div><div class="c">Exhibit Hall</div><div class="c r">1,000</div><div class="c r">$10,000.00</div><div class="c"></div><div class="c r">$10,301.01</div></div>
                <div class="cols-b row sel"><div class="c ind"></div><div class="c st">Tentative</div><div class="c">Mozart Ballroom</div><div class="c">Tue Nov 25 2025 @ 7:30 AM</div><div class="c">8:30 AM-4:30 PM</div><div class="c">Tue Nov 25 2025 @ 5:30 PM</div><div class="c">Sessions A</div><div class="c r">100</div><div class="c r">$1,000.00</div><div class="c"></div><div class="c r">$1,151.52</div></div>
                <div class="cols-b row sel cur"><div class="c ind"><i class="rowmark"></i></div><div class="c st">Tentative</div><div class="c">Vivaldi Ballroom</div><div class="c">Tue Nov 25 2025 @ 8:00 AM</div><div class="c">9:00 AM-5:00 PM</div><div class="c">Tue Nov 25 2025 @ 6:00 PM</div><div class="c">Sessions B</div><div class="c r">150</div><div class="c r">$1,000.00</div><div class="c"></div><div class="c r">$1,212.12</div></div>
                <div class="cols-b row lite"><div class="c ind"></div><div class="c st">Tentative</div><div class="c">Exhibition Hall</div><div class="c">Tue Nov 25 2025 @ 11:00 AM</div><div class="c">1:00 PM-6:00 PM</div><div class="c">Tue Nov 25 2025 @ 8:00 PM</div><div class="c">Exhibit Hall</div><div class="c r">1,000</div><div class="c r">$10,000.00</div><div class="c"></div><div class="c r">$10,301.01</div></div>
                <div class="cols-b row"><div class="c ind"></div><div class="c st">Tentative</div><div class="c">Mozart Ballroom</div><div class="c">Wed Nov 26 2025 @ 7:30 AM</div><div class="c">8:30 AM-4:30 PM</div><div class="c">Wed Nov 26 2025 @ 5:30 PM</div><div class="c">Sessions A</div><div class="c r">100</div><div class="c r">$1,000.00</div><div class="c"></div><div class="c r">$1,151.52</div></div>
              </div>
              <div class="vscroll">
                <svg class="sc-arrow" viewBox="0 0 16 10"><path d="M4 7l4-4 4 4" fill="none" stroke="#777" stroke-width="1.500"/></svg>
                <div class="thumb"><i class="m m1"></i><i class="m m2"></i><i class="m m3"></i><i class="g"></i></div>
                <svg class="sc-arrow dn" viewBox="0 0 16 10"><path d="M4 3l4 4 4-4" fill="none" stroke="#777" stroke-width="1.500"/></svg>
              </div>
            </div>
            <div class="gfoot">
              <div class="fbox count">9</div>
              <div class="fbox total">$38,045.50</div>
            </div>
          </div>
          <div class="lower">
            <div class="tabs tabs3">
              <div class="tab on"><svg class="i"><use href="#mic"/></svg>Setup</div>
              <div class="tab"><svg class="i"><use href="#people"/></svg>Staffing</div>
              <div class="tab"><svg class="i"><use href="#fork"/></svg>Catering</div>
              <div class="tab"><svg class="i"><use href="#goblet"/></svg>Beverages</div>
              <div class="tab"><svg class="i"><use href="#bag"/></svg>Packages</div>
              <div class="tab"><svg class="i"><use href="#itin"/></svg>Itinerary</div>
              <div class="tab"><svg class="i"><use href="#note"/></svg>Notes</div>
              <div class="tab"><svg class="i"><use href="#plan"/></svg>Floor Plans</div>
              <div class="tab"><svg class="i"><use href="#image"/></svg>Images</div>
              <div class="tab"><svg class="i"><use href="#warn"/></svg>Conflicts</div>
            </div>
            <div class="box3">
              <div class="tb tb3">
                <svg class="ti"><use href="#new"/></svg><svg class="ti"><use href="#clone"/></svg><i class="sep"></i>
                <svg class="ti"><use href="#appendd"/></svg><svg class="ti"><use href="#calcd"/></svg><svg class="ti"><use href="#xd"/></svg><i class="sep"></i>
                <svg class="ti"><use href="#openrel"/></svg><i class="sep"></i>
                <svg class="ti"><use href="#views"/></svg><i class="tdd"></i><svg class="ti"><use href="#reset"/></svg><svg class="ti"><use href="#audit"/></svg><svg class="ti"><use href="#hide"/></svg><i class="sep"></i>
                <svg class="ti"><use href="#rainbow"/></svg><i class="sep"></i>
                <svg class="ti"><use href="#up"/></svg><svg class="ti"><use href="#down"/></svg><i class="sep"></i>
                <svg class="ti"><use href="#filter"/></svg><i class="tdd"></i><i class="sep"></i>
                <svg class="ti ml2"><use href="#export"/></svg><i class="tdd w"></i><i class="sep"></i>
                <svg class="ti ml4"><use href="#preview"/></svg>
              </div>
              <div class="cols-c ghead">
                <div class="h"></div><div class="h sort">Item #</div><div class="h sort">Financial Subgroup</div><div class="h sort">Setup Item</div><div class="h sort">Required From Time</div><div class="h sort">Required To Time</div><div class="h">Quantity</div><div class="h">Charge</div><div class="h">Total</div><div class="h"></div><div class="h">Net Charge</div>
              </div>
              <div class="empty"></div>
              <div class="cols-c lfoot">
                <div></div><div></div><div></div><div class="fbox">0</div><div></div><div></div><div></div><div></div><div class="fbox">0</div><div></div><div class="fbox">$0.00</div>
              </div>
            </div>
          </div>
        </div>
      </div>
    </div>
  </div>
  <footer class="status"></footer>
</div>

<div class="tip">
  <strong>Copy Resources</strong>
  <p>Copy resources from another location to selected location(s).</p>
</div>

<div class="menu">
  <div class="mi"><svg class="i"><use href="#new"/></svg><span>New</span><kbd>Ctrl+N</kbd></div>
  <div class="mi"><svg class="i"><use href="#append"/></svg><span>Append Locations</span></div>
  <div class="mi off"><svg class="i"><use href="#clone"/></svg><span>Clone...</span></div>
  <div class="ms"></div>
  <div class="mi"><svg class="i"><use href="#pin"/></svg><span>Location Update</span></div>
  <div class="mi sub"><svg class="i"><use href="#triad"/></svg><span>Change Status</span></div>
  <div class="mi"><svg class="i"><use href="#gearplus"/></svg><span>Add Resources</span></div>
  <div class="mi hl"><svg class="i"><use href="#gearcopy"/></svg><span>Copy Resources</span></div>
  <div class="mi off"><svg class="i"><use href="#geargray"/></svg><span>Move Resources</span></div>
  <div class="mi"><svg class="i"><use href="#itin"/></svg><span>Create Itinerary</span></div>
  <div class="mi"><svg class="i"><use href="#dstar"/></svg><span>Set Best Rate</span></div>
  <div class="mi"><svg class="i"><use href="#drefresh"/></svg><span>Update Rate</span></div>
  <div class="mi off sub"><svg class="i"><use href="#mailplus"/></svg><span>Send Email</span></div>
  <div class="mi off"><svg class="i"><use href="#noteplus"/></svg><span>Add Note</span></div>
  <div class="mi sub"><svg class="i"><use href="#multi"/></svg><span>Multi-Add Detail</span></div>
  <div class="mi"><svg class="i"><use href="#calc"/></svg><span>Recalculate</span></div>
  <div class="mi"><svg class="i"><use href="#x"/></svg><span>Delete</span><kbd>Ctrl+D</kbd></div>
  <div class="ms"></div>
  <div class="mi"><svg class="i"><use href="#clip"/></svg><span>Reports</span></div>
  <div class="ms"></div>
  <div class="mi off"><svg class="i"><use href="#save"/></svg><span>Save</span><kbd>Ctrl+S</kbd></div>
  <div class="mi off"><svg class="i"><use href="#undo"/></svg><span>Cancel</span></div>
  <div class="ms"></div>
  <div class="mi off"><svg class="i"><use href="#openrel"/></svg><span>Open Related Record</span><kbd>Ctrl+Shift+O</kbd></div>
  <div class="ms"></div>
  <div class="mi sub"><svg class="i"><use href="#views"/></svg><span>Views</span></div>
  <div class="mi"><svg class="i"><use href="#reset"/></svg><span>Reset View Settings</span></div>
  <div class="mi off"><svg class="i"><use href="#audit"/></svg><span>Audit Log</span></div>
  <div class="mi"><svg class="i"><use href="#hide"/></svg><span>Hide Detail View</span></div>
  <div class="mi off"><svg class="i"><use href="#viewcal"/></svg><span>View On Calendar</span></div>
  <div class="ms"></div>
  <div class="mi sub"><svg class="i"><use href="#filter"/></svg><span>Filters</span></div>
  <div class="ms"></div>
  <div class="mi sub"><svg class="i"><use href="#export"/></svg><span>Export to</span></div>
  <div class="ms"></div>
  <div class="mi"><svg class="i"><use href="#preview"/></svg><span>Print Preview...</span></div>
  <div class="ms"></div>
  <div class="mi"><i class="i"></i><span>Show Toolbar</span></div>
  <div class="mi"><svg class="i"><use href="#copycell"/></svg><span>Copy Cell Value</span><kbd>Ctrl+Shift+C</kbd></div>
</div>

<svg class="marks" viewBox="0 0 1275 797">
  <polygon fill="#F00" points="218.500,275 325.500,358 330,352 348,375 318,368 322.500,362 215.500,279"/>
  <polygon fill="#F00" points="788.500,193 893.500,275 899,267 912,297 885,287 890.500,279 785.500,197"/>
  <circle cx="362" cy="387" r="14.500" fill="none" stroke="#E8000B" stroke-width="2"/>
</svg>
</body>
</html>
```
FILE: styles.css
```css
* { box-sizing: border-box; }
html, body { margin: 0; padding: 0; }
body {
  position: relative;
  width: 1275px;
  height: 797px;
  overflow: hidden;
  background: #fff;
  font: 10.8px/14px "Open Sans", "Noto Sans", sans-serif;
  letter-spacing: -.22px;
  color: #3d3d3d;
}
i, em { font-style: normal; }
.defs { position: absolute; }
.i { width: 16px; height: 16px; flex: none; display: block; }

/* callout */
.callout {
  width: 97px; height: 57px;
  margin: 3px 0 0 3px;
  border: 1px solid #bdbdbd;
  box-shadow: 3px 4px 3px #8c8c8c;
  display: flex; flex-direction: column; align-items: center;
  background: #fff;
  color: #333;
}
.callout-icon { width: 32px; height: 32px; margin: 4px 0 2px; }

/* window */
.window {
  position: relative;
  width: 1275px; height: 661px;
  margin-top: 26px;
  border: 1px solid #0072C6;
  border-bottom: 0;
  display: flex; flex-direction: column;
}
.logo { position: absolute; left: 3px; top: 1px; width: 46px; height: 46px; }
.titlebar {
  height: 26px; flex: none;
  display: grid; grid-template-columns: 1fr auto 1fr; align-items: center;
}
.qat { display: flex; align-items: center; gap: 6px; padding-left: 60px; }
.qat-drop { width: 7px; height: 6px; margin-left: 7px; border-top: 1px solid #555; position: relative; }
.qat-drop::after { content: ""; display: block; margin-top: 2px; border: 3px solid transparent; border-top-color: #555; border-bottom: 0; }
.wintitle { color: #4a4a4a; }
.winctl { display: flex; justify-content: flex-end; padding-right: 1px; }
.ctl { width: 22px; height: 16px; display: block; }

.rtabs {
  height: 21px; flex: none;
  padding-left: 61px;
  display: flex; align-items: stretch;
  border-bottom: 1px solid #d0d0d0;
}
.rtab { display: flex; align-items: center; justify-content: center; width: 40px; color: #444; }
.rtab.on { width: 45px; color: #0072C6; border: 1px solid #d0d0d0; border-bottom: 0; background: #fff; margin-bottom: -1px; }
.t-tools { width: 42px; }
.collapse { width: 12px; height: 8px; margin: 5px 13px 0 auto; }

.ribbon {
  height: 88px; flex: none;
  display: flex;
  border-bottom: 1px solid #d0d0d0;
}
.rg {
  display: flex; flex-direction: column;
  background: linear-gradient(#d6d6d6, #d6d6d6) right 6px / 1px 74px no-repeat;
}
.g-edit { width: 716px; padding-left: 3px; }
.g-open { width: 120px; }
.g-view { width: 133px; }
.g-nav { width: 251px; }
.g-close { width: 50px; }
.rb-body { height: 72px; display: flex; flex: none; }
.edit-cols { display: grid; grid-template-columns: 56px 54px 34px 96px 46px 68px 42px 58px 44px 76px 46px 92px; }
.rb {
  display: flex; flex-direction: column; align-items: center;
  padding-top: 5px;
  line-height: 13px;
  text-align: center;
  white-space: nowrap;
  color: #404040;
  min-width: 0;
}
.rb span { display: block; }
.lg { width: 32px; height: 32px; flex: none; margin-bottom: 4px; }
.dd { display: block; width: 0; height: 0; border: 2.5px solid transparent; border-top: 3px solid #777; border-bottom: 0; margin-top: 5px; }
.dd.in { display: inline-block; margin: 0 0 2px 2px; vertical-align: middle; }
.rb-label { height: 15px; line-height: 14px; text-align: center; color: #404040; padding-right: 1px; white-space: nowrap; }
.rsmall { padding: 3px 0 0 12px; display: flex; flex-direction: column; white-space: nowrap; color: #404040; }
.rsmall div { height: 22px; display: flex; align-items: center; gap: 3px; }
.s-view { padding-left: 2px; }
.s-nav { padding-left: 2px; }
.sortby { padding-left: 34px; }
.off, .off span { color: #a6a6a6; }
.w-open { width: 119px; }
.w-itin { width: 60px; }
.w-find { width: 55px; }
.w-first { width: 32px; }
.w-prev { width: 62px; }
.w-close { width: 49px; }

/* main */
.main { height: 503px; flex: none; display: flex; }
.sidebar {
  width: 139px; flex: none;
  border-right: 1px solid #cfcfcf;
  display: flex; flex-direction: column;
}
.side-head { height: 32px; padding: 0 6px 2px 6px; display: flex; align-items: center; justify-content: space-between; font-size: 14px; letter-spacing: 0; color: #404040; }
.chev { width: 10px; height: 12px; margin-right: 2px; }
.side-list { list-style: none; margin: 0; padding: 0 1px 0 1px; flex: 1; }
.side-list li { height: 22px; display: flex; align-items: center; gap: 5px; padding-left: 5px; color: #404040; }
.side-list li.on { background: #eeeeee; }
.splitter { height: 6px; flex: none; background: #ebebeb; display: flex; align-items: center; justify-content: center; }
.splitter span { width: 22px; height: 2px; background: repeating-linear-gradient(90deg, #777 0 2px, transparent 2px 4px); }
.side-big { height: 30px; flex: none; display: flex; align-items: center; gap: 6px; padding-left: 9px; font-size: 13.2px; letter-spacing: 0; color: #404040; }
.side-big.cur { color: #0072C6; }
.side-icons { height: 29px; flex: none; display: flex; align-items: center; gap: 7px; padding: 0 4px 0 9px; }
.small-chev { width: 12px; height: 8px; margin-left: 6px; }

.content { width: 1134px; flex: none; display: flex; flex-direction: column; position: relative; }
.doctabs { height: 24px; flex: none; border-bottom: 2px solid #0072C6; display: flex; align-items: flex-end; justify-content: space-between; padding-top: 2px; }
.doctab { width: 177px; height: 22px; background: #0072C6; color: #fff; display: flex; align-items: center; gap: 4px; padding-left: 7px; margin-bottom: -2px; white-space: nowrap; font-size: 11px; letter-spacing: -.1px; }
.doctab span { flex: 1; overflow: hidden; }
.doctab b { font: 12px "DejaVu Sans", sans-serif; margin-right: 4px; }
.dim { opacity: .45; }
.doc-drop { border: 4px solid transparent; border-top: 5px solid #0072C6; border-bottom: 0; margin: 0 5px 8px 0; }

/* group */
.group {
  flex: none; height: 60px;
  margin: 16px 6px 0 5px;
  border: 1px solid #d0d0d0;
}
.legend {
  display: flex; align-items: center; gap: 3px;
  width: fit-content; height: 16px;
  margin: -10px 0 0 6px;
  padding: 0 4px 0 1px;
  background: #fff;
}
.form {
  margin-top: 6px;
  display: grid;
  grid-template-columns: 89px 62px 12px 88px 154px 11px 89px 226px 12px 254px 116px;
  grid-template-rows: 20px 20px;
  row-gap: 2px;
  padding-left: 4px;
}
.form label { line-height: 20px; white-space: nowrap; }
.inp { border: 1px solid #b4b4b4; background: #f0f0f0; display: flex; align-items: center; justify-content: space-between; padding-left: 3px; white-space: nowrap; overflow: hidden; color: #3d3d3d; }
.inp em { width: 16px; height: 18px; border-left: 1px solid #b4b4b4; display: flex; align-items: center; justify-content: center; flex: none; background: #eee; }
.inp.num { justify-content: flex-end; padding-right: 3px; }
.inp.date { width: 198px; }
.inp.yellow { background: #ffffe0; color: #222; }
.inp.tent { background: #ADFF2F; color: #222; }
.inp.open { background: #32CD32; color: #222; }
.dots { width: 2px; height: 16px; margin: 2px 0 0 5px; background: repeating-linear-gradient(#666 0 2px, transparent 2px 4px); }

/* tabs */
.tabs { display: grid; flex: none; align-items: end; }
.tab {
  height: 20px;
  border: 1px solid #b4b4b4; border-bottom: 0;
  display: flex; align-items: center; gap: 2px;
  padding: 0 0 1px 5px;
  white-space: nowrap;
  overflow: hidden;
  background: #fff;
  letter-spacing: -.3px;
}
.tab.on { height: 22px; gap: 1px; padding: 0 0 3px 6px; margin-bottom: -1px; position: relative; z-index: 1; }
.tab.last { justify-content: flex-end; padding-right: 5px; }
.tabs1 { margin: 3px 0 0 5px; height: 22px; grid-template-columns: 89px 71px 79px 76px 66px 109px 59px 70px 106px 65px 65px 90px 92px; }
.box1 { flex: none; height: 372px; margin: 0 6px 0 5px; border: 1px solid #ababab; padding: 2px 2px 0 2px; }
.tabs2 { height: 22px; grid-template-columns: 113px 70px 68px 93px 94px; }
.box2 { height: 344px; border: 1px solid #ababab; }
.tb { height: 24px; display: flex; align-items: center; padding-left: 2px; }
.ti { width: 22px; height: 16px; flex: none; display: block; }
.ml2 { margin-left: 2px; }
.ml4 { margin-left: 4px; }
.ti-on { width: 22px; height: 22px; flex: none; background: #C9E1F5; display: flex; align-items: center; justify-content: center; }
.sep { width: 1px; height: 18px; margin: 0 3px 0 2px; background: #c8c8c8; flex: none; }
.tb3 .sep { margin: 0 3px; }
.tdd { width: 8px; height: 3px; flex: none; display: flex; justify-content: flex-start; }
.tdd::after { content: ""; width: 0; height: 0; border: 3px solid transparent; border-top: 3px solid #333; border-bottom: 0; }
.tdd.w { width: 10px; justify-content: center; }
.tdd.off::after { border-top-color: #bbb; }

.grid { flex: none; }
.cols-a { display: grid; grid-template-columns: 19px 56px 90px 167px 105px 159px 72px 75px 73px 170px 113px 16px; }
.cols-b { display: grid; grid-template-columns: 19px 56px 90px 167px 105px 159px 72px 75px 73px 170px 113px; }
.cols-c { display: grid; grid-template-columns: 18px 72px 141px 96px 147px 132px 67px 59px 150px 118px 1fr; }
.ghead { border-top: 1px solid #d0d0d0; border-bottom: 1px solid #ababab; box-sizing: content-box; height: 14px; }
.h { border-right: 1px solid #c8c8c8; padding-left: 2px; line-height: 14px; white-space: nowrap; overflow: hidden; position: relative; }
.h.sort::after { content: ""; position: absolute; right: 10px; top: 5px; border: 5px solid transparent; border-top: 0; border-bottom: 5px solid #777; }
.gbody { display: flex; height: 141px; border-bottom: 1px solid #ababab; box-sizing: content-box; }
.rows { width: 1099px; height: 141px; overflow: hidden; flex: none; }
.row { height: 21px; background: #efefef; border-bottom: 1px solid #d0d0d0; }
.row.sel { background: #C9E1F5; }
.row.lite { background: #f9f9f9; }
.row.cur { outline: 1px dotted #222; outline-offset: -1px; }
.c { border-right: 1px solid #d0d0d0; padding: 0 2px 0 3px; line-height: 20px; white-space: nowrap; overflow: hidden; }
.c.r { text-align: right; }
.c.st { background: #ADFF2F; color: #111; }
.c.ind { background: #fff; position: relative; border-right: 0; }
.rowmark { position: absolute; left: 6px; top: 6px; border: 4px solid transparent; border-left: 5px solid #666; border-right: 0; }
.vscroll { flex: 1; background: #eeeeee; display: flex; flex-direction: column; }
.sc-arrow { width: 16px; height: 10px; flex: none; margin: 4px 0 3px; }
.sc-arrow.dn { margin: 50px 0 0; }
.thumb { height: 64px; flex: none; background: #cdcdcd; position: relative; }
.m { position: absolute; right: 0; width: 4px; height: 10px; background: #aaa; }
.m1 { top: 11px; } .m2 { top: 35px; } .m3 { top: 48px; }
.g { position: absolute; left: 4px; top: 51px; width: 9px; height: 2px; background: #4a8a2a; }
.gfoot { height: 24px; display: flex; justify-content: space-between; padding: 3px 17px 0 19px; border-bottom: 1px solid #ababab; box-sizing: content-box; }
.fbox { height: 20px; border: 1px solid #b4b4b4; text-align: right; padding-right: 3px; line-height: 18px; background: #fff; }
.count { width: 56px; }
.total { width: 118px; }

.lower { padding: 6px 6px 0 5px; }
.tabs3 { height: 20px; grid-template-columns: 58px 67px 70px 79px 73px 72px 57px 80px 64px 69px; }
.box3 { border: 1px solid #ababab; height: 102px; }
.tb3 { height: 24px; padding-left: 2px; }
.tb3 + .ghead { border-top: 0; height: 15px; }
.tb3 + .ghead .h { line-height: 15px; }
.empty { height: 33px; border-bottom: 1px solid #ababab; box-sizing: content-box; }
.lfoot { padding-top: 3px; height: 24px; }
.lfoot .fbox { margin: 0 2px 0 1px; }

.status { height: 22px; flex: none; background: #0072C6; }

/* tooltip */
.tip {
  position: absolute; left: 366px; top: 410px;
  width: 318px; height: 44px;
  background: #fff;
  border: 1px solid #c8c8c8;
  box-shadow: 1px 1px 2px rgba(0,0,0,.15);
  padding: 5px 8px;
  white-space: nowrap;
}
.tip strong { display: block; font-weight: 700; font-size: 11.3px; color: #444; }
.tip p { margin: 5px 0 0 6px; letter-spacing: -.15px; }

/* context menu */
.menu {
  position: absolute; left: 909px; top: 166px;
  width: 243px;
  border: 1px solid #b0b0b0;
  padding: 1px 1px 1px 2px;
  background: linear-gradient(90deg, #f6f8fc 0 24px, #e3e3e3 24px 25px, #fff 25px);
  color: #333;
  font-size: 11.3px;
  letter-spacing: 0;
}
.mi { height: 20px; display: flex; align-items: center; position: relative; padding-left: 2px; white-space: nowrap; }
.mi > span { margin-left: 7px; flex: 1; }
.mi kbd { font: inherit; margin-right: 11px; }
.mi.sub::after { content: ""; position: absolute; right: 3px; top: 6px; border: 4px solid transparent; border-left: 4px solid #333; border-right: 0; }
.mi.off.sub::after { border-left-color: #aaa; }
.mi.off kbd { color: #a6a6a6; }
.mi.hl { background: #C9E1F7; box-shadow: inset 0 0 0 1px #7FB2E5; }
.ms { height: 1px; margin: 1px 7px 1px 25px; background: #d4d4d4; }

.marks { position: absolute; left: 0; top: 0; width: 1275px; height: 797px; pointer-events: none; }
```
